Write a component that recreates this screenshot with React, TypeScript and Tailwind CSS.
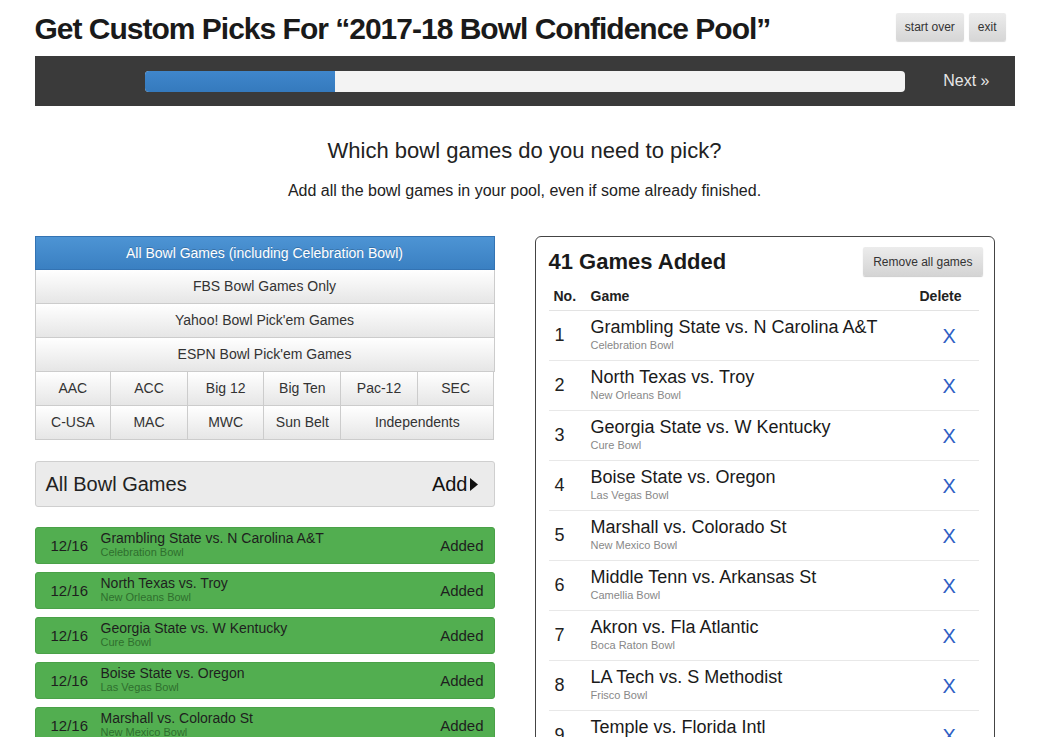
import React from "react";

const left = [
  ["Grambling State vs. N Carolina A&T", "Celebration Bowl"],
  ["North Texas vs. Troy", "New Orleans Bowl"],
  ["Georgia State vs. W Kentucky", "Cure Bowl"],
  ["Boise State vs. Oregon", "Las Vegas Bowl"],
  ["Marshall vs. Colorado St", "New Mexico Bowl"],
];

const right = [
  ["Grambling State vs. N Carolina A&T", "Celebration Bowl"],
  ["North Texas vs. Troy", "New Orleans Bowl"],
  ["Georgia State vs. W Kentucky", "Cure Bowl"],
  ["Boise State vs. Oregon", "Las Vegas Bowl"],
  ["Marshall vs. Colorado St", "New Mexico Bowl"],
  ["Middle Tenn vs. Arkansas St", "Camellia Bowl"],
  ["Akron vs. Fla Atlantic", "Boca Raton Bowl"],
  ["LA Tech vs. S Methodist", "Frisco Bowl"],
  ["Temple vs. Florida Intl", "Gasparilla Bowl"],
];

const btn =
  "bg-gradient-to-b from-[#ffffff] to-[#e6e6e6] border border-[#cccccc] text-[#333] text-[14px] flex items-center justify-center";

export default function App() {
  return (
    <div
      className="w-full min-h-[737px] bg-white text-[#222] overflow-hidden"
      style={{ fontFamily: '"Liberation Sans", Arial, sans-serif' }}
    >
      <div className="mx-auto w-[980px]">
        {/* Title row */}
        <div className="flex items-start justify-between pt-[12px] h-[56px]">
          <h1 className="text-[30px] leading-[34px] font-bold text-[#1a1a1a] tracking-[-1px]">
            Get Custom Picks For “2017-18 Bowl Confidence Pool”
          </h1>
          <div className="flex gap-[5px] mt-[1px] mr-[9px]">
            <button className="h-[28px] px-[9px] text-[12px] text-[#333] rounded-[2px] bg-gradient-to-b from-[#ececec] to-[#d6d6d6] shadow-[0_1px_1px_rgba(0,0,0,0.15)]">
              start over
            </button>
            <button className="h-[28px] px-[9px] text-[12px] text-[#333] rounded-[2px] bg-gradient-to-b from-[#ececec] to-[#d6d6d6] shadow-[0_1px_1px_rgba(0,0,0,0.15)]">
              exit
            </button>
          </div>
        </div>

        {/* Progress bar */}
        <div className="h-[50px] bg-[#3a3a3a] flex items-center pl-[110px] pr-[25px]">
          <div className="w-[760px] h-[21px] rounded-[4px] bg-[#f3f3f3] overflow-hidden flex">
            <div className="w-[190px] h-full bg-gradient-to-b from-[#3f86cc] to-[#357abd]" />
          </div>
          <div className="ml-auto text-[16px] text-[#e6e6e6]">Next »</div>
        </div>

        {/* Heading */}
        <div className="text-center mt-[31px]">
          <div className="text-[22px] leading-[28px] text-[#222]">Which bowl games do you need to pick?</div>
          <div className="text-[16px] leading-[20px] mt-[16px] text-[#222]">
            Add all the bowl games in your pool, even if some already finished.
          </div>
        </div>

        {/* Columns */}
        <div className="flex gap-[40px] mt-[35px]">
          {/* Left */}
          <div className="w-[460px] shrink-0">
            <div className="flex flex-col">
              <div className="h-[34px] flex items-center justify-center text-[14px] text-white bg-gradient-to-b from-[#4d94d4] to-[#3a80c2] border border-[#3373b3] [text-shadow:0_-1px_0_rgba(0,0,0,0.2)]">
                All Bowl Games (including Celebration Bowl)
              </div>
              <div className={`${btn} h-[34px] border-t-0`}>FBS Bowl Games Only</div>
              <div className={`${btn} h-[34px] border-t-0`}>Yahoo! Bowl Pick'em Games</div>
              <div className={`${btn} h-[34px] border-t-0`}>ESPN Bowl Pick'em Games</div>
              <div className="grid grid-cols-6">
                {["AAC", "ACC", "Big 12", "Big Ten", "Pac-12", "SEC"].map((c, i) => (
                  <div key={c} className={`${btn} h-[34px] border-t-0 ${i > 0 ? "border-l-0" : ""}`}>
                    {c}
                  </div>
                ))}
              </div>
              <div className="grid grid-cols-6">
                {["C-USA", "MAC", "MWC", "Sun Belt"].map((c, i) => (
                  <div key={c} className={`${btn} h-[34px] border-t-0 ${i > 0 ? "border-l-0" : ""}`}>
                    {c}
                  </div>
                ))}
                <div className={`${btn} h-[34px] border-t-0 border-l-0 col-span-2`}>Independents</div>
              </div>
            </div>

            <div className="mt-[21px] h-[46px] bg-[#ebebeb] border border-[#cfcfcf] rounded-[3px] flex items-center pl-[10px] pr-[16px]">
              <span className="text-[20px] text-[#222]">All Bowl Games</span>
              <span className="ml-auto text-[20px] text-[#111] flex items-center">
                Add
                <svg width="8" height="13" viewBox="0 0 8 13" className="ml-[2px]">
                  <path d="M0 0 L8 6.5 L0 13 Z" fill="#111" />
                </svg>
              </span>
            </div>

            <div className="mt-[20px] flex flex-col gap-[8px]">
              {left.map(([t, b]) => (
                <div
                  key={t}
                  className="h-[37px] bg-[#52ae50] border border-[#4aa148] rounded-[3px] flex items-center pl-[15px] pr-[10px]"
                >
                  <div className="w-[50px] text-[15px] text-[#1e1e1e] pt-[2px]">12/16</div>
                  <div className="flex flex-col justify-center -mt-[3px]">
                    <div className="text-[14px] leading-[16px] text-[#1e1e1e]">{t}</div>
                    <div className="text-[11px] leading-[12px] text-[#2f6e2e]">{b}</div>
                  </div>
                  <div className="ml-auto text-[15px] text-[#1e1e1e] pt-[2px]">Added</div>
                </div>
              ))}
            </div>
          </div>

          {/* Right */}
          <div className="w-[460px] shrink-0 border border-[#444] rounded-[6px] pl-[13px] pr-[15px] pt-[10px] h-[520px] overflow-hidden">
            <div className="flex items-center justify-between">
              <div className="text-[22px] font-bold text-[#1a1a1a] leading-[28px] mt-[1px]">41 Games Added</div>
              <button className="h-[29px] px-[10px] text-[12px] text-[#333] rounded-[2px] bg-gradient-to-b from-[#ececec] to-[#d4d4d4] shadow-[0_1px_1px_rgba(0,0,0,0.2)] mr-[-4px]">
                Remove all games
              </button>
            </div>
            <div className="mt-[14px] flex items-end h-[21px] border-b border-[#e3e3e3] pb-[3px] text-[14px] font-bold text-[#222]">
              <div className="w-[42px] pl-[5px]">No.</div>
              <div className="flex-1">Game</div>
              <div className="w-[63px] text-left pl-[4px]">Delete</div>
            </div>
            {right.map(([t, b], i) => (
              <div key={t} className="h-[50px] flex items-center border-b border-[#e8e8e8]">
                <div className="w-[42px] pl-[6px] text-[18px] text-[#222]">{i + 1}</div>
                <div className="flex-1 flex flex-col -mt-[2px]">
                  <div className="text-[18px] leading-[21px] text-[#1a1a1a]">{t}</div>
                  <div className="text-[11px] leading-[14px] text-[#888]">{b}</div>
                </div>
                <div className="w-[63px] pl-[27px] text-[20px] text-[#2f5fc4]">X</div>
              </div>
            ))}
          </div>
        </div>
      </div>
    </div>
  );
}
